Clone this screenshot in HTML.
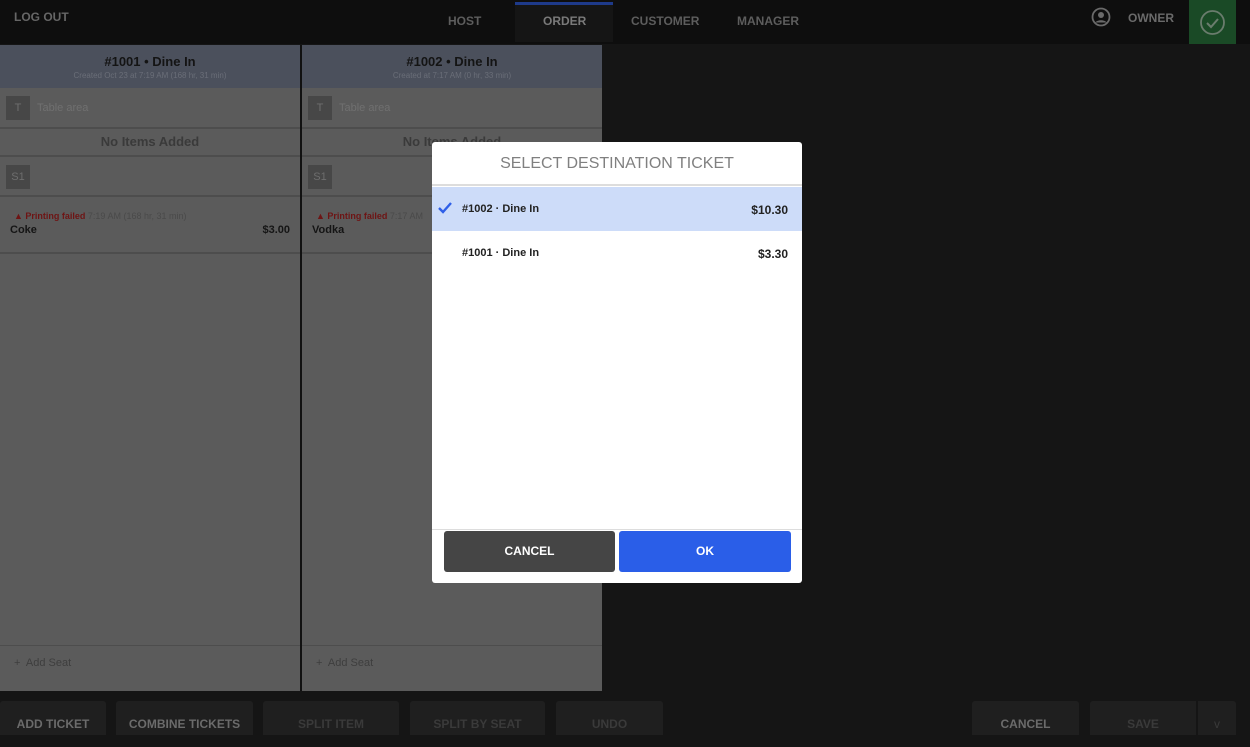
<!DOCTYPE html>
<html><head><style>
*{box-sizing:border-box;margin:0;padding:0}
body{width:1250px;height:735px;background:#151515;font-family:"Liberation Sans",sans-serif;position:relative;overflow:hidden}
.a{position:absolute}
.top{left:0;top:0;width:1250px;height:44px;background:#0e0e0e}
.nav{font-size:12px;font-weight:bold;color:#5d5d5d;top:14px}
.panel{top:45px;width:300px;height:646px;background:#5b5b5b}
.ph{left:0;top:0;width:300px;height:43px;background:#4b505c;text-align:center}
.ph b{display:block;font-size:13px;color:#141414;margin-top:9px}
.ph span{display:block;font-size:8px;color:#6a6e78;margin-top:2px}
.row{left:0;width:300px;border-bottom:2px solid #4d4d4d}
.sq{width:24px;height:24px;background:#474747;color:#6e6e6e;font-size:11px;text-align:center;line-height:24px}
.btn{top:701px;height:34px;background:#1f1f1f;border-radius:3px 3px 0 0;color:#6b6b6b;font-size:12px;font-weight:bold;text-align:center;line-height:46px}
.dim{color:#3a3a3a}
</style></head><body>
<div class="a top"></div>
<div class="a nav" style="left:14px;top:10px;color:#666">LOG OUT</div>
<div class="a" style="left:515px;top:2px;width:98px;height:40px;background:#151515;border-top:3px solid #1e3a8a"></div>
<div class="a nav" style="left:448px">HOST</div>
<div class="a nav" style="left:543px;color:#7a7a7a">ORDER</div>
<div class="a nav" style="left:631px">CUSTOMER</div>
<div class="a nav" style="left:737px">MANAGER</div>
<svg class="a" style="left:1091px;top:7px" width="20" height="20" viewBox="0 0 20 20"><circle cx="10" cy="10" r="8.5" fill="none" stroke="#6a6a6a" stroke-width="1.8"/><circle cx="10" cy="8" r="3" fill="#6a6a6a"/><path d="M4.5 15.5c1.5-3 9.5-3 11 0" fill="#6a6a6a"/></svg>
<div class="a nav" style="left:1128px;top:11px;color:#6a6a6a">OWNER</div>
<div class="a" style="left:1189px;top:0;width:47px;height:44px;background:#1a4a26"></div>
<svg class="a" style="left:1199px;top:9px" width="27" height="27" viewBox="0 0 27 27"><circle cx="13.5" cy="13.5" r="11.5" fill="none" stroke="#6a7c6d" stroke-width="1.8"/><path d="M8 14l4 4 7-8" fill="none" stroke="#6a7c6d" stroke-width="2"/></svg>

<div class="a panel" style="left:0">
 <div class="a ph"><b>#1001 • Dine In</b><span>Created Oct 23 at 7:19 AM (168 hr, 31 min)</span></div>
 <div class="a row" style="top:44px;height:40px"><div class="a sq" style="left:6px;top:7px">T</div><div class="a" style="left:37px;top:13px;font-size:11px;color:#707070">Table area</div></div>
 <div class="a row" style="top:84px;height:28px;text-align:center;font-size:13px;font-weight:bold;color:#3a3a3a;line-height:26px">No Items Added</div>
 <div class="a row" style="top:112px;height:40px"><div class="a sq" style="left:6px;top:8px">S1</div></div>
 <div class="a row" style="top:152px;height:57px"><div class="a" style="left:14px;top:14px;font-size:9px;color:#4a4a4a"><span style="color:#6e1414;font-weight:bold">▲ Printing failed</span> 7:19 AM (168 hr, 31 min)</div><div class="a" style="left:10px;top:27px;font-size:11px;font-weight:bold;color:#151515">Coke</div><div class="a" style="right:10px;top:27px;font-size:11px;font-weight:bold;color:#151515">$3.00</div></div>
 <div class="a" style="left:0;top:600px;width:300px;border-top:1px solid #4d4d4d;height:46px"><div class="a" style="left:14px;top:11px;font-size:11px;color:#3e3e3e">+&nbsp; Add Seat</div></div>
</div>
<div class="a" style="left:300px;top:45px;width:2px;height:646px;background:#111"></div>
<div class="a panel" style="left:302px">
 <div class="a ph"><b>#1002 • Dine In</b><span>Created at 7:17 AM (0 hr, 33 min)</span></div>
 <div class="a row" style="top:44px;height:40px"><div class="a sq" style="left:6px;top:7px">T</div><div class="a" style="left:37px;top:13px;font-size:11px;color:#707070">Table area</div></div>
 <div class="a row" style="top:84px;height:28px;text-align:center;font-size:13px;font-weight:bold;color:#3a3a3a;line-height:26px">No Items Added</div>
 <div class="a row" style="top:112px;height:40px"><div class="a sq" style="left:6px;top:8px">S1</div></div>
 <div class="a row" style="top:152px;height:57px"><div class="a" style="left:14px;top:14px;font-size:9px;color:#4a4a4a"><span style="color:#6e1414;font-weight:bold">▲ Printing failed</span> 7:17 AM</div><div class="a" style="left:10px;top:27px;font-size:11px;font-weight:bold;color:#151515">Vodka</div></div>
 <div class="a" style="left:0;top:600px;width:300px;border-top:1px solid #4d4d4d;height:46px"><div class="a" style="left:14px;top:11px;font-size:11px;color:#3e3e3e">+&nbsp; Add Seat</div></div>
</div>

<div class="a btn" style="left:0;width:106px">ADD TICKET</div>
<div class="a btn" style="left:116px;width:137px">COMBINE TICKETS</div>
<div class="a btn dim" style="left:263px;width:136px">SPLIT ITEM</div>
<div class="a btn dim" style="left:410px;width:135px">SPLIT BY SEAT</div>
<div class="a btn dim" style="left:556px;width:107px">UNDO</div>
<div class="a btn" style="left:972px;width:107px">CANCEL</div>
<div class="a btn dim" style="left:1090px;width:106px;border-radius:3px 0 0 0">SAVE</div>
<div class="a btn dim" style="left:1198px;width:38px;border-radius:0 3px 0 0;font-weight:normal">v</div>

<div class="a" style="left:432px;top:142px;width:370px;height:441px;background:#fff;border-radius:3px">
 <div class="a" style="left:0;top:0;width:370px;height:44px;border-bottom:2px solid #ddd;text-align:center;font-size:16px;color:#808080;line-height:43px">SELECT DESTINATION TICKET</div>
 <div class="a" style="left:0;top:45px;width:370px;height:44px;background:#cddcf9"></div>
 <svg class="a" style="left:6px;top:60px" width="14" height="12" viewBox="0 0 14 12"><path d="M1 6l4 4 8-9" fill="none" stroke="#2f5fe8" stroke-width="2.4"/></svg>
 <div class="a" style="left:30px;top:61px;font-size:11px;font-weight:bold;color:#222">#1002 · Dine In</div>
 <div class="a" style="right:14px;top:61px;font-size:12px;font-weight:bold;color:#222">$10.30</div>
 <div class="a" style="left:30px;top:105px;font-size:11px;font-weight:bold;color:#222">#1001 · Dine In</div>
 <div class="a" style="right:14px;top:105px;font-size:12px;font-weight:bold;color:#222">$3.30</div>
 <div class="a" style="left:0;top:387px;width:370px;border-top:1px solid #ddd"></div>
 <div class="a" style="left:12px;top:389px;width:171px;height:41px;background:#454545;border-radius:3px;color:#fff;font-size:12px;font-weight:bold;text-align:center;line-height:41px">CANCEL</div>
 <div class="a" style="left:187px;top:389px;width:172px;height:41px;background:#2a5ee8;border-radius:3px;color:#fff;font-size:12px;font-weight:bold;text-align:center;line-height:41px">OK</div>
</div>
</body></html>
